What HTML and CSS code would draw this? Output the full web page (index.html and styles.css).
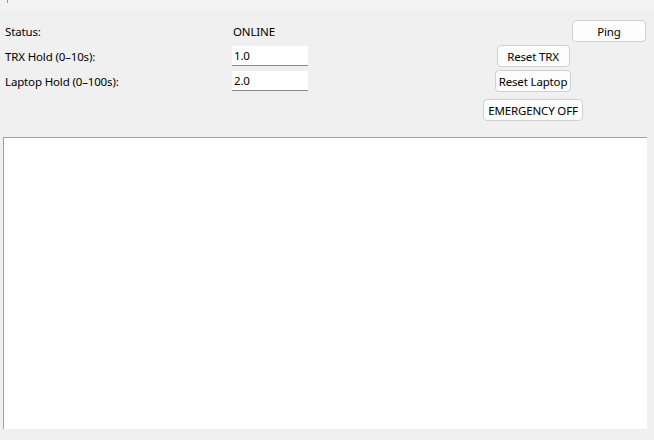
FILE: index.html
```html
<!DOCTYPE html>
<html>
<head>
    <meta charset="UTF-8">
    <title>Control</title>
    <link rel="stylesheet" href="styles.css">
</head>
<body>
    <div class="topstrip"><span class="tick"></span></div>

    <div class="controls">
        <!-- row 0 -->
        <span class="label">Status:</span>
        <span class="value">ONLINE</span>
        <button class="btn ping">Ping</button>

        <!-- row 1 -->
        <span class="label">TRX Hold (0–10s):</span>
        <input class="entry" type="text" value="1.0">
        <button class="btn action trx">Reset TRX</button>

        <!-- row 2 -->
        <span class="label">Laptop Hold (0–100s):</span>
        <input class="entry" type="text" value="2.0">
        <button class="btn action laptop">Reset Laptop</button>

        <!-- row 3 -->
        <button class="btn action emergency">EMERGENCY OFF</button>
    </div>

    <textarea class="log"></textarea>
</body>
</html>
```

FILE: styles.css
```css
html, body {
    margin: 0;
    padding: 0;
    background: #f0f0f0;
    font-family: "Noto Sans", "Open Sans", sans-serif;
    font-size: 11.5px;
    letter-spacing: -0.15px;
    color: #000;
    width: 654px;
    height: 440px;
    overflow: hidden;
}

.topstrip {
    /* light strip under the title bar */
    height: 10px;
    background: #f3f3f3;
    position: relative;
}

.tick {
    position: absolute;
    left: 7px;
    top: 0;
    width: 1px;
    height: 3px;
    background: #9a9a9a;
}

.controls {
    /* columns: label, entry, spacer, button column, ping column */
    display: grid;
    grid-template-columns: 227px 76px 1fr 100px 63px;
    grid-template-rows: 22px 22px 22px 26px;
    row-gap: 3px;
    align-items: center;
    padding: 10px 8px 0 5px;
}

.label {
    grid-column: 1;
}

.value {
    grid-column: 2;
    padding-left: 1px;
}

.entry {
    grid-column: 2;
    box-sizing: border-box;
    width: 76px;
    height: 20px;
    margin: 0;
    padding: 0 2px;
    border: none;
    border-bottom: 1px solid #8a8a8a;
    background: #fff;
    font: inherit;
    letter-spacing: inherit;
    outline: none;
}

.btn {
    box-sizing: border-box;
    height: 22px;
    margin: 0;
    padding: 0;
    background: #fdfdfd;
    border: 1px solid #d0d0d0;
    border-radius: 4px;
    font: inherit;
    letter-spacing: inherit;
    color: #000;
    white-space: nowrap;
}

.ping {
    grid-column: 4 / 6;
    justify-self: end;
    width: 74px;
}

.action {
    grid-column: 4;
    justify-self: center;
}

.trx {
    width: 73px;
}

.laptop {
    width: 76px;
}

.emergency {
    width: 100px;
    align-self: end;
}

.log {
    /* text output area */
    display: block;
    box-sizing: border-box;
    width: 644px;
    height: 292px;
    margin: 16px 0 0 3px;
    border: none;
    border-top: 1px solid #a0a0a0;
    border-left: 1px solid #a0a0a0;
    background: #fff;
    resize: none;
    outline: none;
}
```
